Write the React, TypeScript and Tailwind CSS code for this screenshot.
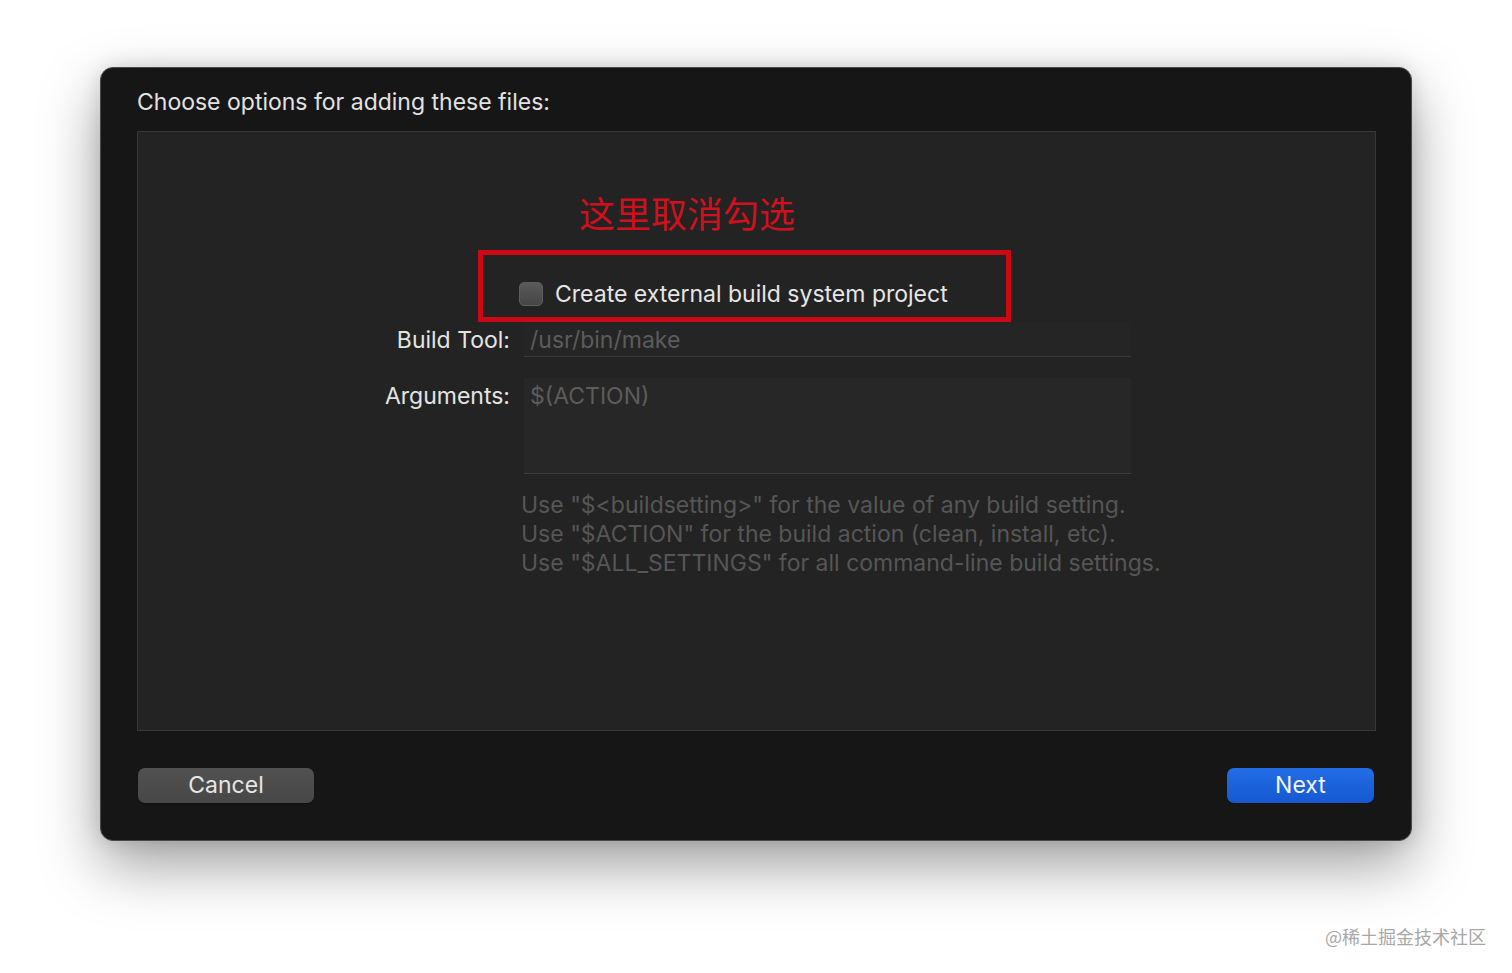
import React from "react";

const sans = "font-['Inter','Noto_Sans_CJK_SC',sans-serif]";

export default function App() {
  return (
    <div className={`relative w-[1512px] h-[973px] bg-white overflow-hidden ${sans}`}>
      <div className="pt-[67px] pl-[100px]">
        <div className="w-[1312px] h-[774px] rounded-[13px] bg-[#171617] border border-[#4a4a4a] shadow-[0_24px_60px_rgba(0,0,0,0.38),0_0_20px_rgba(0,0,0,0.12)] flex flex-col px-[36px]">
          <div className="h-[63px] flex items-end pb-[15px] text-[23px] leading-[28px] text-[#e2e2e2]">
            Choose options for adding these files:
          </div>
          <div className="w-[1239px] h-[600px] bg-[#232323] border border-[#383838] flex flex-col">
            <div className="pt-[62px] pl-[441px] text-[36px] leading-[36px] text-[#d0101c] font-['Noto_Sans_CJK_SC',sans-serif] tracking-[0px]">
              这里取消勾选
            </div>
            <div className="mt-[20px] ml-[340px] w-[533px] h-[72px] border-[5px] border-[#cc0a16] flex items-center pl-[36px] pt-[15px]">
              <div className="w-[24px] h-[24px] rounded-[5px] bg-gradient-to-b from-[#5a5a5a] to-[#464646] border border-[#5e5e5e]" />
              <span className="ml-[12px] text-[23px] leading-[28px] text-[#e6e6e6]">
                Create external build system project
              </span>
            </div>
            <div className="flex mt-0">
              <div className="w-[372px] text-right text-[23px] leading-[37px] text-[#e4e4e4]">
                Build Tool:
              </div>
              <div className="ml-[14px] w-[607px] h-[35px] bg-[#252525] border-b border-[#3c3c3c] pl-[6px] text-[23px] leading-[37px] text-[#5c5c5c]">
                /usr/bin/make
              </div>
            </div>
            <div className="flex mt-[19px]">
              <div className="w-[372px] text-right text-[23px] leading-[36px] text-[#e4e4e4]">
                Arguments:
              </div>
              <div className="ml-[14px] w-[607px] h-[96px] bg-[#272727] border-b border-[#3e3e3e] pl-[6px] text-[23px] leading-[36px] text-[#5c5c5c]">
                $(ACTION)
              </div>
            </div>
            <div className="ml-[383px] mt-[17px] text-[23px] leading-[29px] text-[#565656]">
              <div>Use "$&lt;buildsetting&gt;" for the value of any build setting.</div>
              <div>Use "$ACTION" for the build action (clean, install, etc).</div>
              <div>Use "$ALL_SETTINGS" for all command-line build settings.</div>
            </div>
          </div>
          <div className="flex justify-between mt-[37px] pl-[1px] pr-[1px]">
            <button className="w-[176px] h-[35px] rounded-[7px] bg-gradient-to-b from-[#515151] to-[#474747] text-[23px] leading-[35px] text-[#e6e6e6] shadow-[0_1px_1px_rgba(0,0,0,0.4)]">
              Cancel
            </button>
            <button className="w-[147px] h-[35px] rounded-[7px] bg-gradient-to-b from-[#226de6] to-[#1559d0] text-[23px] leading-[35px] text-[#f2f2f2] shadow-[0_1px_1px_rgba(0,0,0,0.4)]">
              Next
            </button>
          </div>
        </div>
      </div>
      <div className="absolute right-[26px] bottom-[27px] text-[18px] leading-[20px] text-[#a8a8a8] font-['Noto_Sans_CJK_SC',sans-serif]">
        @稀土掘金技术社区
      </div>
    </div>
  );
}
